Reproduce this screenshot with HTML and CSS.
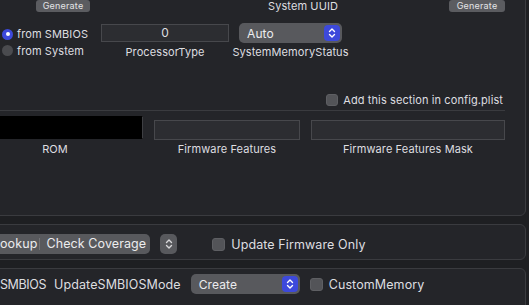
FILE: index.html
```html
<!DOCTYPE html>
<html lang="en">
<head>
  <meta charset="UTF-8">
  <meta name="viewport" content="width=device-width, initial-scale=1.0">
  <title>PlatformInfo</title>
  <link rel="stylesheet" href="styles.css">
</head>
<body>
  <div class="window">
    <section class="group group-top">
      <div class="gen-row">
        <button class="btn-small gen-left">Generate</button>
        <span class="uuid-label">System UUID</span>
        <button class="btn-small gen-right">Generate</button>
      </div>

      <div class="mem-row">
        <div class="radios">
          <label class="radio"><span class="dot on"></span>from SMBIOS</label>
          <label class="radio"><span class="dot"></span>from System</label>
        </div>
        <div class="field-col col-proc">
          <div class="textfield num">0</div>
          <span class="cap">ProcessorType</span>
        </div>
        <div class="field-col col-mem">
          <div class="popup">
            <span>Auto</span>
            <span class="stepper blue">
              <svg width="10" height="12" viewBox="0 0 10 12"><path d="M2.5 4.5 L5 2 L7.5 4.5 M2.5 7.5 L5 10 L7.5 7.5" fill="none" stroke="#fff" stroke-width="1.4" stroke-linecap="round" stroke-linejoin="round"/></svg>
            </span>
          </div>
          <span class="cap">SystemMemoryStatus</span>
        </div>
      </div>

      <div class="add-row">
        <label class="check"><span class="box"></span>Add this section in config.plist</label>
      </div>
      <div class="sep"></div>

      <div class="fw-row">
        <div class="field-col col-rom">
          <div class="textfield rom"></div>
          <span class="cap">ROM</span>
        </div>
        <div class="field-col col-fw">
          <div class="textfield"></div>
          <span class="cap">Firmware Features</span>
        </div>
        <div class="field-col col-fwm">
          <div class="textfield"></div>
          <span class="cap">Firmware Features Mask</span>
        </div>
      </div>
    </section>

    <section class="group group-mid">
      <div class="segmented">
        <span class="seg seg-first">ookup</span>
        <span class="seg">Check Coverage</span>
      </div>
      <span class="stepper grey">
        <svg width="10" height="12" viewBox="0 0 10 12"><path d="M2.5 4.5 L5 2 L7.5 4.5 M2.5 7.5 L5 10 L7.5 7.5" fill="none" stroke="#d8d8da" stroke-width="1.4" stroke-linecap="round" stroke-linejoin="round"/></svg>
      </span>
      <label class="check check-lg check-fw"><span class="box"></span>Update Firmware Only</label>
    </section>

    <section class="group group-bot">
      <span class="cut-label">SMBIOS</span>
      <span class="mode-label">UpdateSMBIOSMode</span>
      <div class="popup popup-create">
        <span>Create</span>
        <span class="stepper blue">
          <svg width="10" height="12" viewBox="0 0 10 12"><path d="M2.5 4.5 L5 2 L7.5 4.5 M2.5 7.5 L5 10 L7.5 7.5" fill="none" stroke="#fff" stroke-width="1.4" stroke-linecap="round" stroke-linejoin="round"/></svg>
        </span>
      </div>
      <label class="check check-lg"><span class="box"></span>CustomMemory</label>
    </section>
  </div>
</body>
</html>
```

FILE: styles.css
```css
body {
  margin: 0;
  background-color: #1e1f22;
  font-family: 'Inter', 'Liberation Sans', sans-serif;
  font-size: 11px;
  letter-spacing: 0.1px;
  color: #dedee0;
  overflow: hidden;
  width: 529px;
  height: 305px;
}

.window {
  display: flex;
  flex-direction: column;
  gap: 8px;
}

.group {
  margin-left: -40px;
  margin-right: 3px;
  padding-left: 39px;
  padding-right: 20px;
  background-color: #242529;
  border: 1px solid #3a3b3f;
  border-radius: 6px;
}

/* top section */
.group-top {
  margin-top: -20px;
  padding-top: 19px;
  padding-bottom: 59px;
}

.gen-row {
  display: flex;
  align-items: center;
  height: 12px;
}

.btn-small {
  height: 12px;
  padding: 0;
  border: none;
  border-radius: 3px;
  background-color: #5b5c60;
  color: #e4e4e6;
  font-family: 'Inter', 'Liberation Sans', sans-serif;
  font-size: 9px;
  letter-spacing: 0.2px;
  line-height: 12px;
}

.gen-left {
  margin-left: 36px;
  width: 54px;
}

.gen-right {
  margin-left: auto;
  width: 56px;
}

.uuid-label {
  margin-left: 148px;
  width: 130px;
  text-align: center;
  line-height: 12px;
}

.mem-row {
  display: flex;
  margin-top: 11px;
  height: 36px;
}

.radios {
  width: 99px;
  margin-left: 2px;
  padding-top: 3px;
  display: flex;
  flex-direction: column;
}

.radio {
  display: flex;
  align-items: center;
  gap: 4px;
  height: 17px;
  white-space: nowrap;
}

.dot {
  width: 11px;
  height: 11px;
  border-radius: 50%;
  background-color: #4a4b4f;
  display: flex;
  align-items: center;
  justify-content: center;
}

.dot.on {
  background-color: #3d49db;
}

.dot.on::after {
  content: "";
  width: 4px;
  height: 4px;
  border-radius: 50%;
  background-color: #fff;
}

.field-col {
  display: flex;
  flex-direction: column;
  align-items: center;
}

.cap {
  white-space: nowrap;
  line-height: 14px;
  margin-top: 2px;
}

.col-proc {
  width: 128px;
}

.col-proc .textfield {
  margin-top: 1px;
  height: 18px;
}

.col-proc .cap {
  margin-top: 3px;
}

.col-mem {
  width: 103px;
  margin-left: 10px;
}

.textfield {
  box-sizing: border-box;
  width: 100%;
  height: 20px;
  background-color: #2c2d31;
  border: 1px solid #47484c;
  line-height: 16px;
}

.textfield.num {
  text-align: center;
  font-size: 12px;
}

.popup {
  box-sizing: border-box;
  width: 100%;
  height: 20px;
  display: flex;
  align-items: center;
  justify-content: space-between;
  padding: 0 2px 0 8px;
  border-radius: 5px;
  background-color: #58595d;
  color: #ececee;
  font-size: 12px;
}

.stepper {
  display: flex;
  align-items: center;
  justify-content: center;
  border-radius: 4px;
}

.stepper.blue {
  width: 16px;
  height: 16px;
  background-color: #3d49db;
}

.stepper.grey {
  width: 17px;
  height: 20px;
  margin-left: 10px;
  border-radius: 5px;
  background-color: #58595d;
}

.add-row {
  display: flex;
  justify-content: flex-end;
  margin-top: 34px;
  padding-right: 2px;
  line-height: 14px;
}

.check {
  display: flex;
  align-items: center;
  gap: 5px;
  white-space: nowrap;
}

.box {
  width: 12px;
  height: 12px;
  border-radius: 3px;
  background-color: #535458;
  border: 1px solid #5e5f63;
  box-sizing: border-box;
}

.check-lg {
  gap: 6px;
}

.check-lg .box {
  width: 13px;
  height: 13px;
}

.sep {
  height: 1px;
  margin-top: 3px;
  background-color: #3a3b3f;
}

.fw-row {
  display: flex;
  margin-top: 5px;
}

.col-rom {
  width: 176px;
  margin-left: -33px;
}

.textfield.rom {
  height: 23px;
  background-color: #000;
  border-color: #000 #3e3f43 #000 #000;
}

.col-rom .cap {
  margin-top: 3px;
}

.col-fw {
  width: 146px;
  margin-left: 11px;
}

.col-fwm {
  width: 194px;
  margin-left: 11px;
}

.col-fw .textfield,
.col-fwm .textfield {
  margin-top: 4px;
}

/* middle section */
.group-mid {
  display: flex;
  align-items: center;
  padding-top: 9px;
  padding-bottom: 5px;
  font-size: 12.5px;
}

.segmented {
  display: flex;
  align-items: center;
  height: 20px;
  margin-left: -10px;
  padding-left: 10px;
  border-radius: 5px;
  background-color: #58595d;
  color: #ececee;
}

.seg {
  line-height: 20px;
}

.seg-first {
  padding-right: 2px;
}

.seg + .seg {
  border-left: 1px solid #727377;
  line-height: 12px;
  padding: 0 4px 0 6px;
}

.check-fw {
  margin-left: 35px;
}

/* bottom section */
.group-bot {
  display: flex;
  align-items: center;
  padding-top: 5px;
  padding-bottom: 20px;
  font-size: 12.5px;
}

.cut-label {
  letter-spacing: -0.4px;
  white-space: nowrap;
}

.mode-label {
  margin-left: 8px;
  white-space: nowrap;
}

.popup-create {
  width: 109px;
  margin-left: 10px;
}

.group-bot .check {
  margin-left: 10px;
}
```
